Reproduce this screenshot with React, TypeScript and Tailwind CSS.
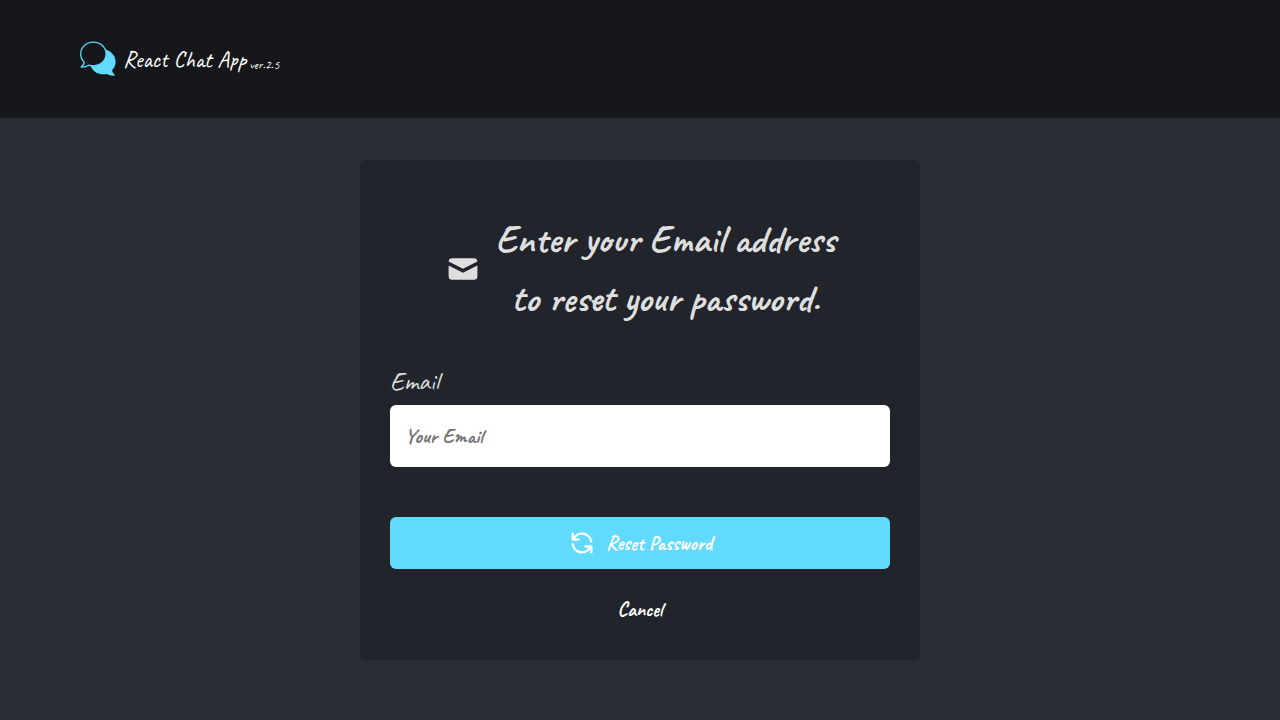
import { HiMail, HiOutlineRefresh } from "react-icons/hi";

function ChatLogo() {
  return (
    <svg viewBox="0 0 36 36" className="size-9 shrink-0" aria-hidden="true">
      <path
        d="M20 8c9-.5 15.600 5.500 15.600 12.700 0 3.400-1.400 6.300-3.500 8.400.1 2 1.200 3.900 3.300 5.200-2.800.7-5.700.3-8.300-1.300-7 1.200-14-1-16.600-8.200z"
        fill="#61dafb"
      />
      <path
        d="M13.400 1.200C6.300 1.200.7 6.300.7 12.900c0 3.300 1.300 6.100 3.500 8.200-.1 2-1.100 3.600-3 5 2.900.2 5.400-.4 7.500-1.900 1.500.4 3 .6 4.700.6 7 0 12.700-5.300 12.700-11.900S20.400 1.200 13.400 1.200z"
        fill="#16171a"
        stroke="#61dafb"
        strokeWidth="1.300"
        strokeLinejoin="round"
      />
    </svg>
  );
}

export default function App() {
  return (
    <div className="min-h-screen bg-[#282c34] font-['Caveat',cursive] text-white">
      <header className="bg-[#16171a] px-20 py-10">
        <a href="#" className="flex h-[38px] w-fit items-center gap-[7px]">
          <ChatLogo />
          <span className="flex items-end gap-[3px] pt-0.5 text-[23px] leading-8">
            React Chat App <small className="text-[13px] leading-[22px]">ver.2.5</small>
          </span>
        </a>
      </header>

      <main className="px-4 py-[42px]">
        <form
          className="mx-auto flex max-w-[560px] flex-col rounded-md bg-[#21242b] px-[30px] pt-[50px] pb-[30px]"
          onSubmit={(event) => event.preventDefault()}
        >
          <div className="flex items-center justify-center gap-[15px] text-[#dedede]">
            <HiMail className="size-9 shrink-0" aria-hidden="true" />
            <h1 className="text-center text-[39px] leading-[59px] font-bold">
              Enter your Email address
              <br />
              to reset your password.
            </h1>
          </div>

          <label htmlFor="email" className="mt-[34px] text-[26px] leading-[40px] font-medium text-[#dedede]">
            Email
          </label>
          <input
            id="email"
            type="email"
            placeholder="Your Email"
            className="mt-[3px] h-[62px] w-full rounded-md bg-white px-[15px] text-[21px] font-semibold text-[#21242b] placeholder:text-[#757575]"
          />

          <button
            type="submit"
            className="mt-[50px] flex h-[52px] items-center justify-center gap-[10px] rounded-md bg-[#61dafb] text-[20px] font-bold"
          >
            <HiOutlineRefresh className="size-7" aria-hidden="true" />
            <span className="pt-0.5">Reset Password</span>
          </button>
          <a href="#" className="mx-auto mt-[21px] text-[20px] leading-10 font-bold">
            Cancel
          </a>
        </form>
      </main>
    </div>
  );
}
